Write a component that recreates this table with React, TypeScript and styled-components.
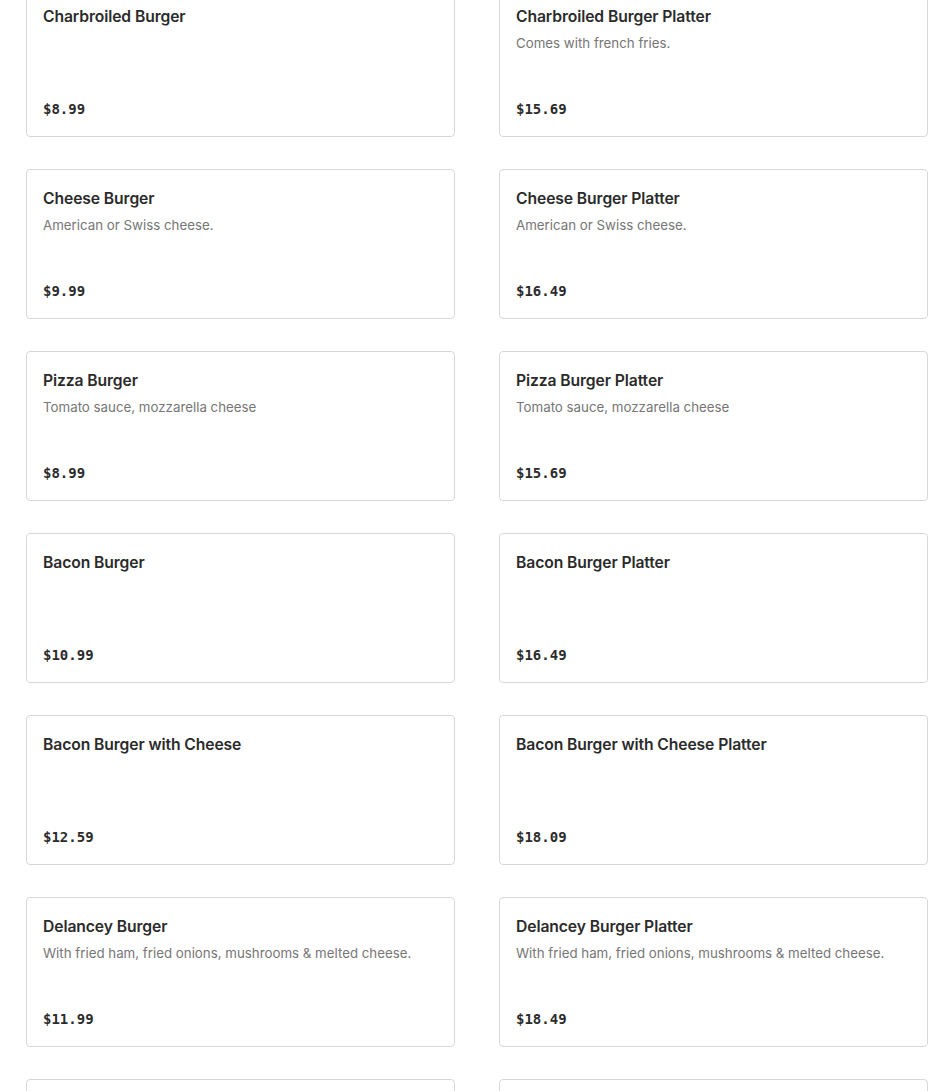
import styled, { createGlobalStyle } from "styled-components";

const GlobalStyle = createGlobalStyle`
  html, body {
    margin: 0;
    padding: 0;
    background: #ffffff;
  }
  body {
    font-family: Inter, "Noto Sans", sans-serif;
    color: #2d2d2d;
    overflow: hidden;
  }
`

const MenuGrid = styled.div`
  display: grid;
  grid-template-columns: 429px 429px;
  column-gap: 44px;
  row-gap: 32px;
  padding: 0 22px 40px 26px;
  margin-top: -13px;
`

const Card = styled.div`
  box-sizing: border-box;
  height: 150px;
  border: 1px solid #d8d8d8;
  border-radius: 4px;
  padding: 17px 16px 15px 16px;
  display: flex;
  flex-direction: column;
  background: #fff;
`

const Title = styled.div`
  font-size: 15.7px;
  line-height: 24px;
  font-weight: 600;
  color: #2b2b2b;
  letter-spacing: -0.1px;
`

const Description = styled.div`
  margin-top: 3px;
  font-size: 13.3px;
  line-height: 22px;
  color: #767676;
`

const Price = styled.div`
  margin-top: auto;
  font-family: "DejaVu Sans Mono", "Liberation Mono", monospace;
  font-size: 14px;
  line-height: 24px;
  font-weight: 700;
  color: #2b2b2b;
`

interface IMenuItem {
  name?: string;
  description?: string;
  price?: string;
}

const items: IMenuItem[] = [
  {name: "Charbroiled Burger", price: "$8.99"},
  {name: "Charbroiled Burger Platter", description: "Comes with french fries.", price: "$15.69"},
  {name: "Cheese Burger", description: "American or Swiss cheese.", price: "$9.99"},
  {name: "Cheese Burger Platter", description: "American or Swiss cheese.", price: "$16.49"},
  {name: "Pizza Burger", description: "Tomato sauce, mozzarella cheese", price: "$8.99"},
  {name: "Pizza Burger Platter", description: "Tomato sauce, mozzarella cheese", price: "$15.69"},
  {name: "Bacon Burger", price: "$10.99"},
  {name: "Bacon Burger Platter", price: "$16.49"},
  {name: "Bacon Burger with Cheese", price: "$12.59"},
  {name: "Bacon Burger with Cheese Platter", price: "$18.09"},
  {name: "Delancey Burger", description: "With fried ham, fried onions, mushrooms & melted cheese.", price: "$11.99"},
  {name: "Delancey Burger Platter", description: "With fried ham, fried onions, mushrooms & melted cheese.", price: "$18.49"},
  // next row only peeks in at the bottom edge
  {},
  {}
]

export default function App() {
  return (
    <>
      <GlobalStyle />
      <MenuGrid>
        {items.map((item, i) => (
          <Card key={i}>
            {item.name && <Title>{item.name}</Title>}
            {item.description && <Description>{item.description}</Description>}
            {item.price && <Price>{item.price}</Price>}
          </Card>
        ))}
      </MenuGrid>
    </>
  )
}
